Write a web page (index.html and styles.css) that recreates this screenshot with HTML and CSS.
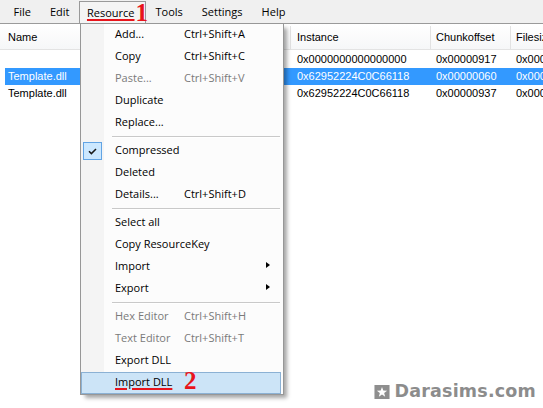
FILE: index.html
```html
<!DOCTYPE html>
<html>
<head>
<meta charset="utf-8">
<title>Resource menu</title>
<link rel="stylesheet" href="styles.css">
</head>
<body>
<div class="app">
  <div class="menubar">
    <span class="mi">File</span>
    <span class="mi">Edit</span>
    <span class="mi open"><span class="mark">Resource</span><span class="num one">1</span></span>
    <span class="mi">Tools</span>
    <span class="mi">Settings</span>
    <span class="mi">Help</span>
  </div>

  <div class="list">
    <div class="lhead">
      <div class="c name">Name</div>
      <div class="c inst">Instance</div>
      <div class="c chunk">Chunkoffset</div>
      <div class="c size">Filesize</div>
    </div>
    <div class="rows">
      <div class="row">
        <div class="c name"></div>
        <div class="c inst">0x0000000000000000</div>
        <div class="c chunk">0x00000917</div>
        <div class="c size">0x00000A4C</div>
      </div>
      <div class="row sel">
        <div class="c name">Template.dll</div>
        <div class="c inst">0x62952224C0C66118</div>
        <div class="c chunk">0x00000060</div>
        <div class="c size">0x000008B7</div>
      </div>
      <div class="row">
        <div class="c name">Template.dll</div>
        <div class="c inst">0x62952224C0C66118</div>
        <div class="c chunk">0x00000937</div>
        <div class="c size">0x000008B7</div>
      </div>
    </div>
  </div>

  <div class="dropdown">
    <div class="item"><span class="gut"></span><span class="lbl">Add...</span><span class="key">Ctrl+Shift+A</span></div>
    <div class="item"><span class="gut"></span><span class="lbl">Copy</span><span class="key">Ctrl+Shift+C</span></div>
    <div class="item dis"><span class="gut"></span><span class="lbl">Paste...</span><span class="key">Ctrl+Shift+V</span></div>
    <div class="item"><span class="gut"></span><span class="lbl">Duplicate</span></div>
    <div class="item"><span class="gut"></span><span class="lbl">Replace...</span></div>
    <div class="sep"></div>
    <div class="item"><span class="gut"><span class="check"><svg width="9" height="7" viewBox="0 0 9 7"><polyline points="1,3.2 3.4,5.6 8,1" fill="none" stroke="#1a1a1a" stroke-width="1.5"/></svg></span></span><span class="lbl">Compressed</span></div>
    <div class="item"><span class="gut"></span><span class="lbl">Deleted</span></div>
    <div class="item"><span class="gut"></span><span class="lbl">Details...</span><span class="key">Ctrl+Shift+D</span></div>
    <div class="sep"></div>
    <div class="item"><span class="gut"></span><span class="lbl">Select all</span></div>
    <div class="item"><span class="gut"></span><span class="lbl">Copy ResourceKey</span></div>
    <div class="item"><span class="gut"></span><span class="lbl">Import</span><span class="arrow"></span></div>
    <div class="item"><span class="gut"></span><span class="lbl">Export</span><span class="arrow"></span></div>
    <div class="sep"></div>
    <div class="item dis"><span class="gut"></span><span class="lbl">Hex Editor</span><span class="key">Ctrl+Shift+H</span></div>
    <div class="item dis"><span class="gut"></span><span class="lbl">Text Editor</span><span class="key">Ctrl+Shift+T</span></div>
    <div class="item"><span class="gut"></span><span class="lbl">Export DLL</span></div>
    <div class="item hot"><span class="gut"></span><span class="lbl"><span class="mark">Import DLL</span></span><span class="num two">2</span></div>
  </div>

  <div class="watermark">
    <svg class="star" width="16" height="14" viewBox="0 0 14 13"><rect x="0" y="0" width="14" height="13" fill="#8e8e8e"/><polygon points="7,1.8 8.23,5.1 11.76,5.26 9,7.45 9.94,10.85 7,8.9 4.06,10.85 5,7.45 2.24,5.26 5.77,5.1" fill="#fff"/></svg>
    <span class="wtext">Darasims.com</span>
  </div>
</div>
</body>
</html>
```

FILE: styles.css
```css
* {
  box-sizing: border-box;
  margin: 0;
  padding: 0;
}

html, body {
  width: 543px;
  height: 408px;
  overflow: hidden;
  background: #fff;
}

body {
  font-family: "Open Sans", "Noto Sans", sans-serif;
  font-size: 11px;
  color: #000;
}

.app {
  position: relative;
  width: 543px;
  height: 408px;
  overflow: hidden;
  background: #fff;
}

/* ---------- menu bar ---------- */
.menubar {
  display: flex;
  height: 24px;
  padding: 1px 0 0 4px;
  background: #f0f0f0;
  border-bottom: 1px solid #9a9a9a;
}

.mi {
  height: 22px;
  line-height: 22px;
  padding: 0 9.5px;
  white-space: nowrap;
}

.mi.open {
  padding: 0 0 0 7px;
  line-height: 21px;
  border: 1px solid #999;
  border-bottom: 0;
  background: #f4f4f4;
}

.mark {
  text-decoration: underline;
  text-decoration-color: #e8141b;
  text-decoration-thickness: 2px;
  text-underline-offset: 2px;
}

.num {
  font-family: "Liberation Serif", "Times New Roman", serif;
  font-weight: bold;
  color: #e8141b;
  font-size: 25px;
  line-height: 0;
}

.num.one {
  margin-left: 1px;
  margin-right: -3px;
  vertical-align: -4px;
}

/* ---------- list view ---------- */
.list {
  font-family: "Liberation Sans", Arial, sans-serif;
  font-size: 11px;
}

.lhead {
  display: flex;
  height: 26px;
  padding-top: 2px;
  line-height: 23px;
  background: linear-gradient(#ffffff, #f6f7f8);
  border-bottom: 1px solid #e3e3e3;
  white-space: nowrap;
}

.lhead .c {
  border-right: 1px solid #e2e2e2;
}

.c {
  flex: none;
  overflow: hidden;
  white-space: nowrap;
}

.lhead .name { width: 291px; padding-left: 8px; }
.c.inst { width: 140px; padding-left: 6px; }
.c.chunk { width: 80px; padding-left: 5px; }
.c.size { width: 120px; padding-left: 5px; }

.rows {
  padding-top: 1px;
}

.row {
  display: flex;
  height: 17px;
  line-height: 17px;
  margin-left: 5px;
}

.row .name { width: 286px; padding-left: 3px; }

.row.sel {
  background: #3399ff;
  color: #fff;
}

/* ---------- dropdown ---------- */
.dropdown {
  position: absolute;
  left: 80px;
  top: 23px;
  width: 204px;
  border: 1px solid #979797;
  background: linear-gradient(to right, #f4f4f4 0, #f4f4f4 23px, #fcfcfc 23px);
  box-shadow: 4px 4px 4px -1px rgba(0, 0, 0, 0.35);
}

.item {
  display: flex;
  align-items: center;
  height: 22px;
  padding-bottom: 4px;
  margin-right: 2px;
  border: 1px solid transparent;
  white-space: nowrap;
}

.item.dis {
  color: #7a7a7a;
}

.item.hot {
  background: #cce4f7;
  border-color: #8bb1d4;
}

.gut {
  flex: none;
  width: 22px;
  height: 18px;
  margin-left: 1px;
  margin-bottom: -4px;
  display: flex;
  align-items: center;
}

.check {
  width: 19px;
  height: 18px;
  border: 1px solid #62a4e4;
  background: #cce8ff;
  display: flex;
  align-items: center;
  justify-content: center;
}

.check svg {
  display: block;
}

.lbl {
  flex: none;
  width: 69px;
  margin-left: 10px;
}

.key {
  flex: none;
}

.arrow {
  margin-left: auto;
  margin-right: 10px;
  width: 0;
  height: 0;
  border-left: 4px solid #000;
  border-top: 3.5px solid transparent;
  border-bottom: 3.5px solid transparent;
}

.num.two {
  margin-bottom: 0;
}

.sep {
  height: 6px;
  padding: 2px 3px 0 31px;
}

.sep::after {
  content: "";
  display: block;
  height: 1px;
  background: #c9c9c9;
  border-bottom: 1px solid #fff;
  box-sizing: content-box;
}

/* ---------- watermark ---------- */
.watermark {
  position: absolute;
  top: 381px;
  right: 7px;
  display: flex;
  align-items: center;
  gap: 4px;
  color: #8c8c8c;
}

.star {
  display: block;
  margin-top: 2px;
}

.wtext {
  font-family: "DejaVu Sans", Verdana, sans-serif;
  font-weight: bold;
  font-size: 17.5px;
  line-height: 20px;
  letter-spacing: 0.2px;
}
```
